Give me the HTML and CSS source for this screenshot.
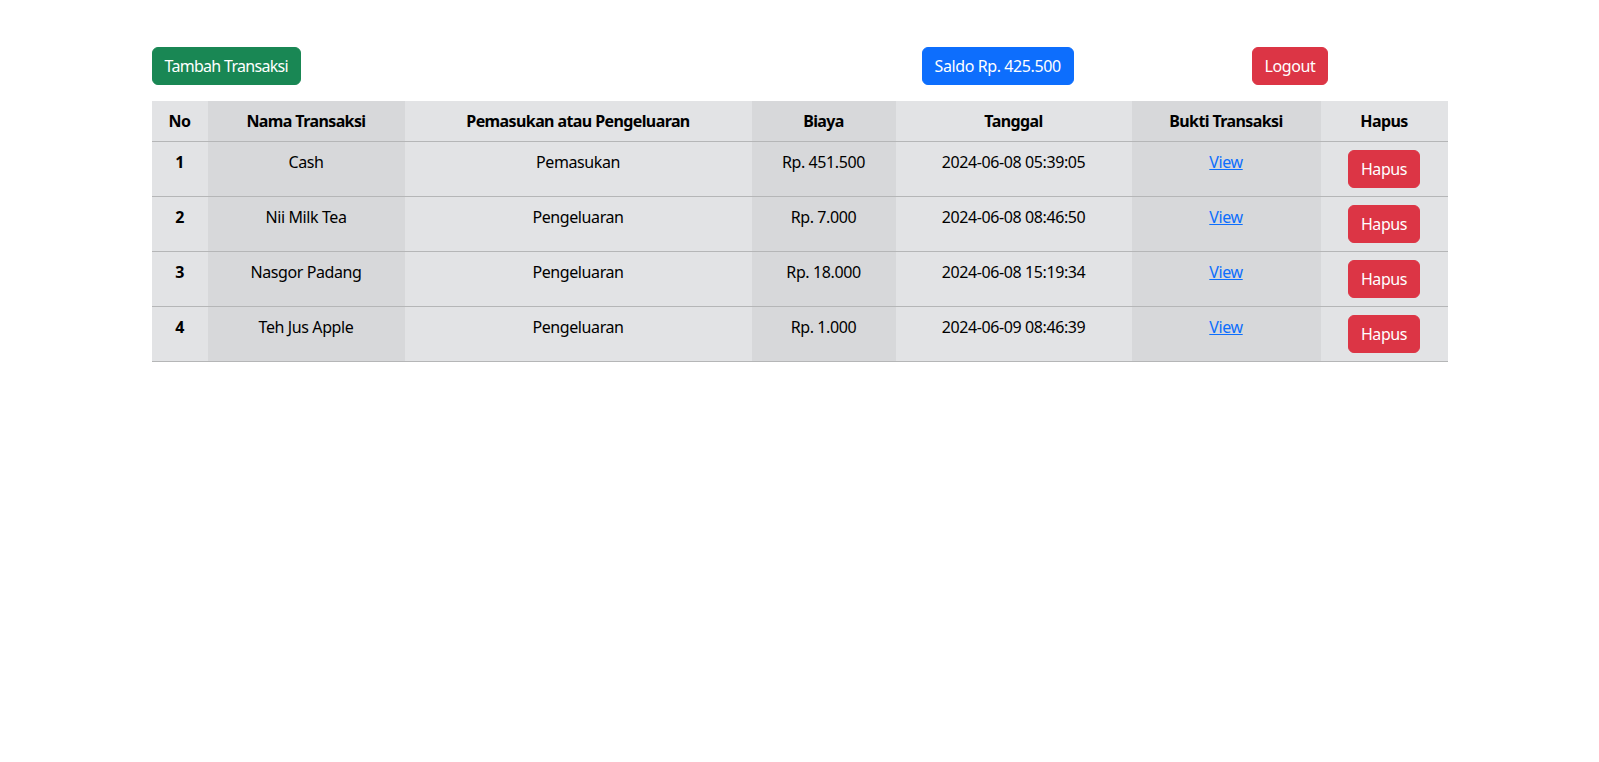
FILE: index.html
```html
<!DOCTYPE html>
<html lang="id">
<head>
<meta charset="utf-8">
<title>Transaksi</title>
<link rel="stylesheet" href="styles.css">
</head>
<body>
<div class="container">
  <div class="topbar">
    <div><button class="btn btn-success btn-tight">Tambah Transaksi</button></div>
    <div><button class="btn btn-primary">Saldo Rp. 425.500</button></div>
    <div><button class="btn btn-danger">Logout</button></div>
  </div>
  <table class="table">
    <thead>
      <tr>
        <th class="c-no">No</th>
        <th class="c-nama">Nama Transaksi</th>
        <th class="c-jenis">Pemasukan atau Pengeluaran</th>
        <th class="c-biaya">Biaya</th>
        <th class="c-tgl">Tanggal</th>
        <th class="c-bukti">Bukti Transaksi</th>
        <th class="c-hapus">Hapus</th>
      </tr>
    </thead>
    <tbody>
      <tr>
        <th>1</th><td>Cash</td><td>Pemasukan</td><td>Rp. 451.500</td><td>2024-06-08 05:39:05</td><td><a href="#">View</a></td><td><button class="btn btn-danger">Hapus</button></td>
      </tr>
      <tr>
        <th>2</th><td>Nii Milk Tea</td><td>Pengeluaran</td><td>Rp. 7.000</td><td>2024-06-08 08:46:50</td><td><a href="#">View</a></td><td><button class="btn btn-danger">Hapus</button></td>
      </tr>
      <tr>
        <th>3</th><td>Nasgor Padang</td><td>Pengeluaran</td><td>Rp. 18.000</td><td>2024-06-08 15:19:34</td><td><a href="#">View</a></td><td><button class="btn btn-danger">Hapus</button></td>
      </tr>
      <tr>
        <th>4</th><td>Teh Jus Apple</td><td>Pengeluaran</td><td>Rp. 1.000</td><td>2024-06-09 08:46:39</td><td><a href="#">View</a></td><td><button class="btn btn-danger">Hapus</button></td>
      </tr>
    </tbody>
  </table>
</div>
</body>
</html>
```
FILE: styles.css
```css
* { box-sizing: border-box; }
body {
  margin: 0;
  font-family: "Noto Sans", "Open Sans", sans-serif;
  font-size: 16px;
  line-height: 1.5;
  letter-spacing: -0.5px;
  color: #212529;
  background: #fff;
}
.container {
  width: 1296px;
  margin: 0 auto;
  padding-top: 47px;
}
.topbar {
  display: grid;
  grid-template-columns: 770px 330px auto;
  margin-bottom: 16px;
}
.btn {
  display: inline-block;
  font-family: inherit;
  font-size: 16px;
  line-height: 24px;
  letter-spacing: -0.4px;
  padding: 6px 12px;
  border: 1px solid transparent;
  border-radius: 6px;
  color: #fff;
  cursor: pointer;
}
.btn-tight { letter-spacing: -0.7px; }
.btn-success { background: #198754; border-color: #198754; }
.btn-primary { background: #0d6efd; border-color: #0d6efd; }
.btn-danger { background: #dc3545; border-color: #dc3545; }
.table {
  width: 100%;
  border-collapse: collapse;
  color: #000;
  background: #e2e3e5;
  text-align: center;
}
.table th, .table td {
  padding: 8px;
  border-bottom: 1px solid #b5b6b7;
  vertical-align: top;
}
.table td { letter-spacing: -0.4px; }
.table tr > :nth-child(even) { background: #d7d8da; }
.table th { font-weight: 700; letter-spacing: -0.6px; }
.c-no { width: 56px; }
.c-nama { width: 197px; }
.c-jenis { width: 347px; }
.c-biaya { width: 144px; }
.c-tgl { width: 236px; }
.c-bukti { width: 189px; }
.c-hapus { width: 127px; }
.table a { color: #0d6efd; text-decoration: underline; }
```
